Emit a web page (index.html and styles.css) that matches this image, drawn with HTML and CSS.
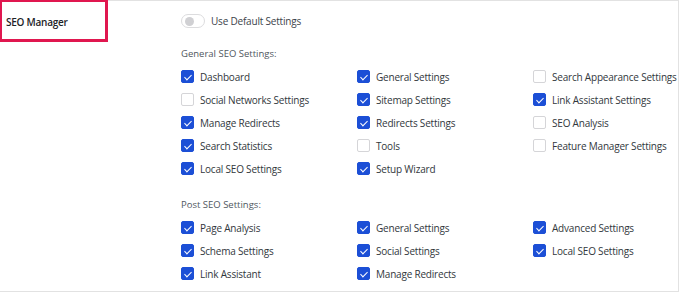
FILE: index.html
```html
<!DOCTYPE html>
<html lang="en">
<head>
    <meta charset="UTF-8">
    <title>SEO Manager</title>
    <link rel="stylesheet" href="styles.css">
</head>
<body>
    <div class="panel">
        <div class="label-col">
            <div class="field-title">SEO Manager</div>
        </div>
        <div class="content-col">
            <div class="toggle-row">
                <span class="toggle"><span class="knob"></span></span>
                <span class="toggle-text">Use Default Settings</span>
            </div>

            <div class="section-label">General SEO Settings:</div>
            <div class="check-grid">
                <label class="check on"><span class="box"></span>Dashboard</label>
                <label class="check on"><span class="box"></span>General Settings</label>
                <label class="check"><span class="box"></span>Search Appearance Settings</label>
                <label class="check"><span class="box"></span>Social Networks Settings</label>
                <label class="check on"><span class="box"></span>Sitemap Settings</label>
                <label class="check on"><span class="box"></span>Link Assistant Settings</label>
                <label class="check on"><span class="box"></span>Manage Redirects</label>
                <label class="check on"><span class="box"></span>Redirects Settings</label>
                <label class="check"><span class="box"></span>SEO Analysis</label>
                <label class="check on"><span class="box"></span>Search Statistics</label>
                <label class="check"><span class="box"></span>Tools</label>
                <label class="check"><span class="box"></span>Feature Manager Settings</label>
                <label class="check on"><span class="box"></span>Local SEO Settings</label>
                <label class="check on"><span class="box"></span>Setup Wizard</label>
            </div>

            <div class="section-label post">Post SEO Settings:</div>
            <div class="check-grid">
                <label class="check on"><span class="box"></span>Page Analysis</label>
                <label class="check on"><span class="box"></span>General Settings</label>
                <label class="check on"><span class="box"></span>Advanced Settings</label>
                <label class="check on"><span class="box"></span>Schema Settings</label>
                <label class="check on"><span class="box"></span>Social Settings</label>
                <label class="check on"><span class="box"></span>Local SEO Settings</label>
                <label class="check on"><span class="box"></span>Link Assistant</label>
                <label class="check on"><span class="box"></span>Manage Redirects</label>
            </div>
        </div>
        <div class="highlight"></div>
    </div>
</body>
</html>
```

FILE: styles.css
```css
* {
    margin: 0;
    padding: 0;
    box-sizing: border-box;
}

body {
    font-family: 'Open Sans', sans-serif;
    background: #fff;
    color: #3c434a;
    width: 680px;
    height: 292px;
    overflow: hidden;
}

.panel {
    position: relative;
    display: flex;
    width: 679px;
    height: 292px;
    border: 1px solid #e2e2e2;
    border-left: none;
}

.label-col {
    flex-shrink: 0;
    width: 181px;
    padding: 14px 0 0 6px;
}

.field-title {
    font-size: 10px;
    font-weight: 600;
    letter-spacing: -0.25px;
    color: #1d2327;
    line-height: 14px;
}

.content-col {
    flex: 1;
    padding-top: 13px;
}

.toggle-row {
    display: flex;
    align-items: center;
    height: 14px;
}

.toggle {
    width: 24px;
    height: 14px;
    border: 1px solid #dcdcde;
    border-radius: 7px;
    background: #fff;
    display: flex;
    align-items: center;
    padding-left: 3px;
}

.knob {
    width: 9px;
    height: 9px;
    border-radius: 50%;
    background: #d0d0d3;
}

.toggle-text {
    margin-left: 6px;
    font-size: 10px;
    letter-spacing: -0.2px;
    color: #3c434a;
}

.section-label {
    font-size: 9.5px;
    color: #50575e;
    line-height: 14px;
    margin-top: 19px;
}

.section-label.post {
    margin-top: 18px;
}

.check-grid {
    display: grid;
    grid-template-columns: 176px 176px 1fr;
    grid-auto-rows: 23px;
    margin-top: 4px;
}

.check {
    display: flex;
    align-items: center;
    font-size: 10px;
    letter-spacing: -0.2px;
    color: #32373c;
    white-space: nowrap;
}

.box {
    width: 13px;
    height: 13px;
    border: 1px solid #d5d5d8;
    border-radius: 2px;
    background: #fff;
    margin-right: 6px;
    flex-shrink: 0;
    position: relative;
}

.check.on .box {
    background: #1c4fd6;
    border-color: #1c4fd6;
}

.check.on .box::after {
    content: '';
    position: absolute;
    left: 3.5px;
    top: 2px;
    width: 3px;
    height: 6px;
    border: solid #fff;
    border-width: 0 1.6px 1.6px 0;
    transform: rotate(45deg);
}

.highlight {
    position: absolute;
    left: -1px;
    top: -1px;
    width: 109px;
    height: 42px;
    border: 3px solid #e0174f;
    border-top-width: 2px;
}
```
